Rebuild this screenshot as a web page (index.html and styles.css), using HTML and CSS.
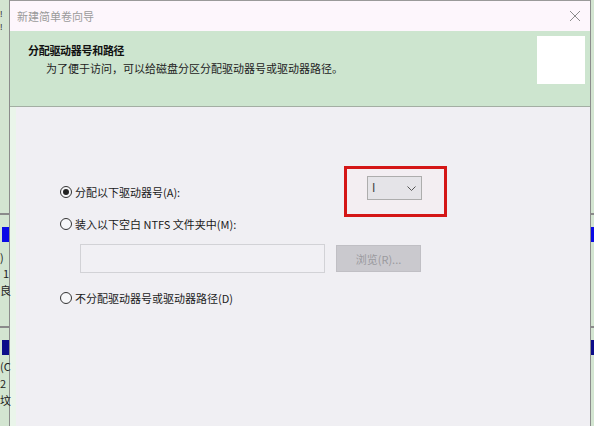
FILE: index.html
```html
<!DOCTYPE html>
<html lang="zh">
<head>
<meta charset="utf-8">
<title>新建简单卷向导</title>
<link rel="stylesheet" href="styles.css">
</head>
<body>
<div class="desk desk-left">
  <span class="mark m1">!</span>
  <span class="mark m2">!</span>
  <span class="dash d1"></span>
  <span class="bar b1"></span>
  <span class="bg-text t1">)</span>
  <span class="bg-text t2">1</span>
  <span class="bg-text t3">良</span>
  <span class="dash d2"></span>
  <span class="bar b2"></span>
  <span class="bg-text t4">(C</span>
  <span class="bg-text t5">2</span>
  <span class="bg-text t6">坟</span>
</div>
<div class="dialog">
  <div class="titlebar">
    <span class="title">新建简单卷向导</span>
    <svg class="close" width="12" height="12" viewBox="0 0 12 12"><path d="M1 1L11 11M11 1L1 11" stroke="#8c8c8c" stroke-width="1"/></svg>
  </div>
  <div class="header">
    <div class="head-text">
      <div class="head-title">分配驱动器号和路径</div>
      <div class="head-sub">为了便于访问，可以给磁盘分区分配驱动器号或驱动器路径。</div>
    </div>
    <div class="head-icon"></div>
  </div>
  <div class="content">
    <div class="row row-first">
      <label class="opt opt-wide"><span class="radio checked"></span><span>分配以下驱动器号(A):</span></label>
      <div class="highlight">
        <div class="combo"><span class="combo-val">I</span><svg class="chev" width="9" height="5" viewBox="0 0 9 5"><path d="M0.5 0.5L4.5 4.5L8.5 0.5" fill="none" stroke="#555" stroke-width="1"/></svg></div>
      </div>
    </div>
    <label class="opt"><span class="radio"></span><span>装入以下空白 NTFS 文件夹中(M):</span></label>
    <div class="path-row">
      <div class="textbox"></div>
      <div class="btn">浏览(R)...</div>
    </div>
    <label class="opt opt-last"><span class="radio"></span><span>不分配驱动器号或驱动器路径(D)</span></label>
  </div>
</div>
<div class="desk desk-right">
  <span class="dash d1"></span>
  <span class="bar b1"></span>
  <span class="dash d2"></span>
  <span class="bar b2"></span>
</div>
</body>
</html>
```
FILE: styles.css
```css
html, body {
  margin: 0;
  padding: 0;
}
body {
  width: 594px;
  height: 426px;
  overflow: hidden;
  display: flex;
  background: #d2e4d0;
  font-family: "Noto Sans CJK SC", "Noto Sans", sans-serif;
  font-size: 11px;
  color: #1a1a1a;
}
.desk {
  position: relative;
  flex: none;
  height: 426px;
  background: #d3e5d1;
}
.desk-left { width: 9px; }
.desk-right { width: 3px; }
.mark {
  position: absolute;
  left: 0;
  font-family: "Liberation Sans", sans-serif;
  font-size: 9px;
  line-height: 9px;
  height: 9px;
  overflow: hidden;
  color: #333;
}
.m1 { top: 10px; }
.m2 { top: 23px; }
.dash {
  position: absolute;
  left: 0;
  right: 0;
  height: 2px;
  background: #8a8a8a;
}
.d1 { top: 213px; }
.d2 { top: 326px; }
.bar {
  position: absolute;
  left: 2px;
  right: 0;
  height: 15px;
}
.desk-right .bar { left: 0; }
.b1 { top: 227px; background: #0a0ae6; }
.b2 { top: 340px; background: #0c0c8a; }
.bg-text {
  position: absolute;
  left: 0;
  font-size: 11px;
  line-height: 12px;
  color: #222;
  white-space: nowrap;
}
.t1 { top: 251px; }
.t2 { top: 267px; left: 3px; }
.t3 { top: 284px; }
.t4 { top: 360px; }
.t5 { top: 377px; }
.t6 { top: 394px; }
.dialog {
  flex: none;
  width: 580px;
  border-left: 1px solid #8c8c8c;
  border-right: 1px solid #8c8c8c;
  display: flex;
  flex-direction: column;
  background: #f0eff3;
}
.titlebar {
  flex: none;
  height: 30px;
  border-top: 1px solid #9a9a9a;
  background: #fdf6fc;
  display: flex;
  align-items: center;
  justify-content: space-between;
  padding: 0 9px 0 7px;
}
.title {
  color: #9a9a9a;
  font-size: 11px;
}
.close { display: block; }
.header {
  flex: none;
  height: 75px;
  background: #cde5cf;
  border-bottom: 1px solid #a3aea3;
  display: flex;
  justify-content: space-between;
  align-items: flex-start;
  padding: 0 5px 0 18px;
}
.head-text { padding-top: 11px; }
.head-title {
  font-weight: bold;
  line-height: 16px;
  color: #111;
  letter-spacing: -0.3px;
}
.head-sub {
  margin-top: 2px;
  padding-left: 18px;
  line-height: 16px;
  color: #222;
}
.head-icon {
  margin-top: 5px;
  width: 48px;
  height: 48px;
  background: #ffffff;
}
.content {
  flex: 1;
  padding: 59px 0 0 50px;
  background: linear-gradient(to right, #eaf5ea 0, #eaf5ea 6px, #f0eff3 6px);
  display: flex;
  flex-direction: column;
  align-items: flex-start;
}
.row {
  display: flex;
  align-items: center;
}
.opt {
  display: flex;
  align-items: center;
  gap: 3px;
  height: 14px;
  line-height: 14px;
  white-space: nowrap;
}
.opt-wide { width: 284px; }
.opt-last { margin-top: 18px; }
.radio {
  box-sizing: border-box;
  width: 12px;
  height: 12px;
  border: 1px solid #333;
  border-radius: 50%;
  background: #f7f7f9;
  display: flex;
  align-items: center;
  justify-content: center;
}
.radio.checked::after {
  content: "";
  width: 6px;
  height: 6px;
  border-radius: 50%;
  background: #222;
}
.highlight {
  box-sizing: border-box;
  width: 103px;
  height: 51px;
  border: 3px solid #d41616;
  background: #f3eef2;
  padding: 7px 0 0 20px;
}
.combo {
  box-sizing: border-box;
  width: 55px;
  height: 24px;
  background: #e5e4e8;
  border: 1px solid #adadad;
  display: flex;
  align-items: center;
  justify-content: space-between;
  padding: 0 5px 0 4px;
}
.combo-val {
  color: #444;
  font-size: 12px;
  font-family: "Liberation Sans", sans-serif;
}
.path-row {
  display: flex;
  margin: 13px 0 0 20px;
  gap: 11px;
  align-items: center;
}
.textbox {
  box-sizing: border-box;
  width: 245px;
  height: 29px;
  border: 1px solid #d2d2d6;
  background: #f1f0f4;
}
.btn {
  box-sizing: border-box;
  width: 85px;
  height: 27px;
  background: #cac9ce;
  border: 1px solid #c0bfc4;
  color: #9a9a9e;
  display: flex;
  align-items: center;
  justify-content: center;
}
```
